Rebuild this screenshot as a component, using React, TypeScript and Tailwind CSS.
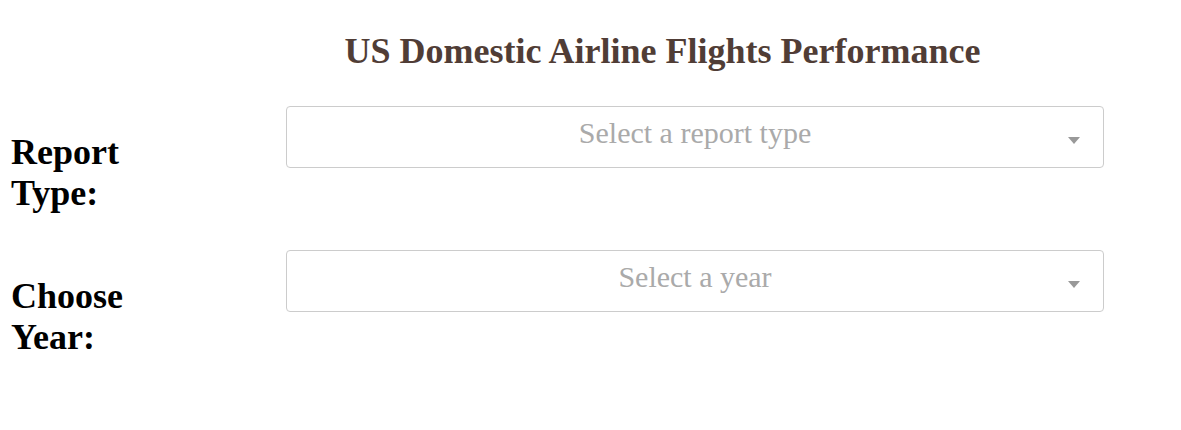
export default function App() {
  const rows = [
    { label: 'Report Type:', placeholder: 'Select a report type' },
    { label: 'Choose Year:', placeholder: 'Select a year' },
  ];

  return (
    <div
      className="w-[1181px] h-[430px] bg-white overflow-hidden"
      style={{ fontFamily: '"Liberation Serif", "Times New Roman", serif' }}
    >
      {/* Title */}
      <h1 className="pt-[31px] pl-[144px] text-center text-[36px] leading-[41px] font-bold text-[#503D36]">
        US Domestic Airline Flights Performance
      </h1>

      {/* Form rows */}
      <div className="mt-[34px] flex flex-col gap-[36px]">
        {rows.map((row) => (
          <div key={row.label} className="flex items-start">
            <div className="w-[286px] shrink-0 pl-[11px] pt-[26px]">
              <h2 className="max-w-[160px] text-[36px] leading-[41px] font-bold text-black">
                {row.label}
              </h2>
            </div>
            <div className="w-[818px] h-[62px] flex items-start border border-[#ccc] rounded-[4px] bg-white">
              <div className="w-[36px] shrink-0" />
              <div className="flex-1 mt-[9px] text-center text-[30px] leading-[34px] text-[#aaa]">
                {row.placeholder}
              </div>
              <div className="w-[36px] shrink-0 pt-[30px]">
                <div className="w-0 h-0 ml-[1px] border-x-[6px] border-x-transparent border-t-[7px] border-t-[#999]" />
              </div>
            </div>
          </div>
        ))}
      </div>
    </div>
  );
}
